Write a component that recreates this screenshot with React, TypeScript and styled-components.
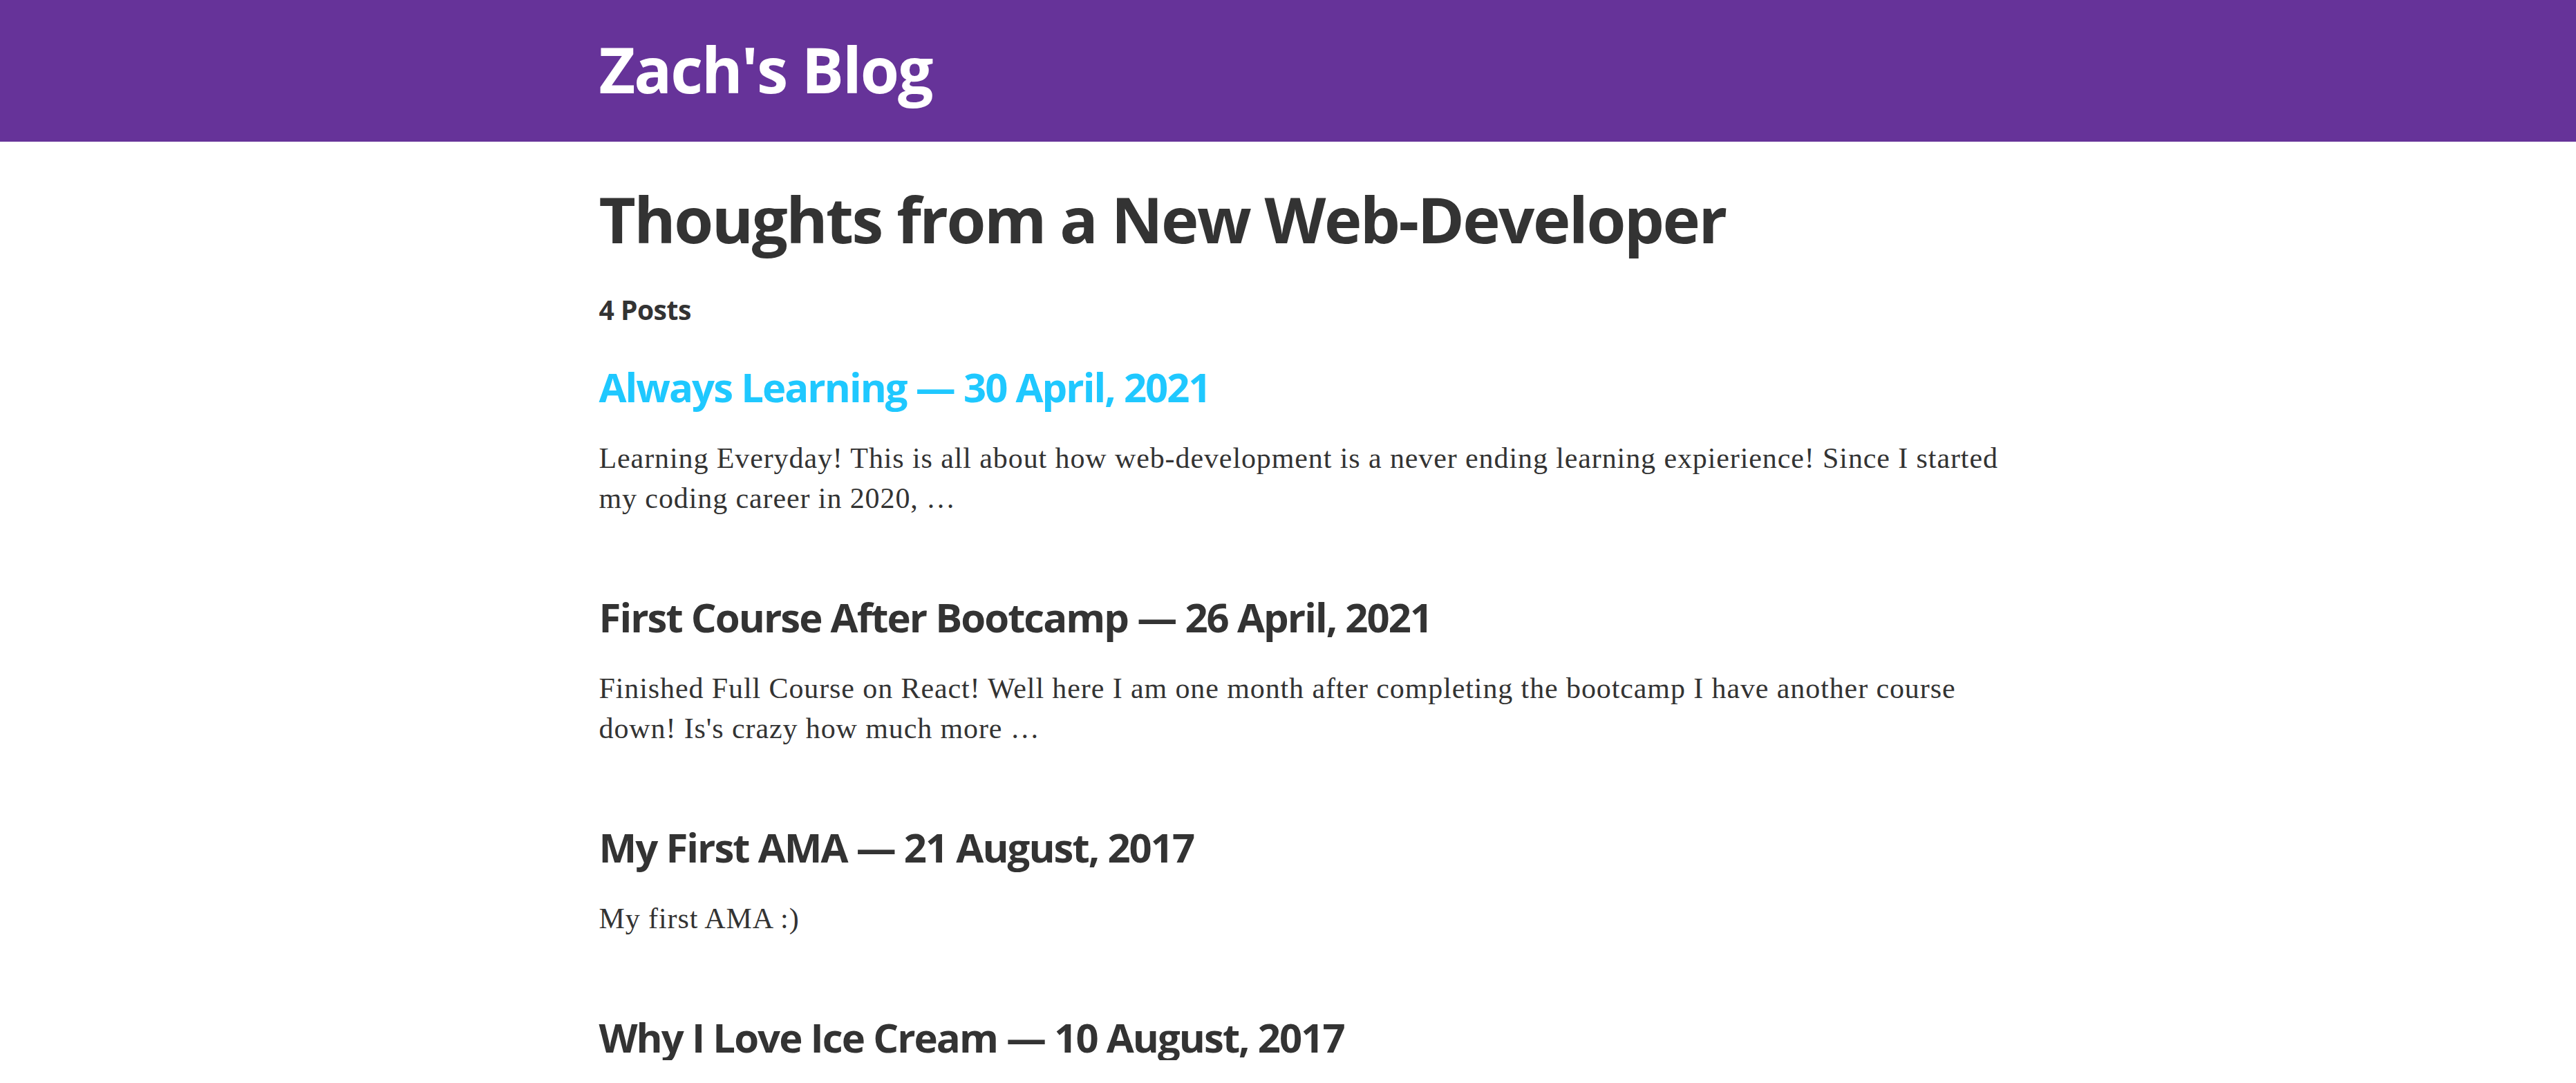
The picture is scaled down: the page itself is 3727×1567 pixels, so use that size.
import React from "react";
import styled, { createGlobalStyle } from "styled-components";

const GlobalStyle = createGlobalStyle`
  html, body {
    margin: 0;
    padding: 0;
    background: #ffffff;
  }
  body {
    font-family: "Liberation Serif", "Times New Roman", serif;
    color: rgba(0, 0, 0, 0.8);
  }
  * { box-sizing: border-box; }
`;

const Page = styled.div`
  display: flex;
  flex-direction: column;
  padding-left: 60px;
`;

const Header = styled.header`
  background: #663399;
  margin-left: -60px;
  padding: 50px 0 55px 60px;
`;

const Container = styled.div`
  width: 2054px;
  margin: 0 auto;
`;

const SiteTitle = styled.h1`
  margin: 0;
  font-family: "Open Sans", "Noto Sans", sans-serif;
  font-weight: 700;
  font-size: 91px;
  line-height: 100px;
  letter-spacing: -2px;
  a {
    color: #ffffff;
    text-decoration: none;
  }
`;

const Main = styled.main`
  padding-top: 62px;
`;

const PageTitle = styled.h1`
  margin: 0 0 52px;
  font-family: "Open Sans", "Noto Sans", sans-serif;
  font-weight: 700;
  font-size: 92px;
  line-height: 100px;
  letter-spacing: -2.5px;
  color: #333333;
`;

const PostCount = styled.h4`
  margin: 0 0 50px;
  font-family: "Open Sans", "Noto Sans", sans-serif;
  font-weight: 700;
  font-size: 39px;
  line-height: 58px;
  letter-spacing: -0.5px;
  color: #333333;
`;

const PostList = styled.div`
  display: flex;
  flex-direction: column;
  gap: 110px;
`;

const PostItem = styled.article`
  display: flex;
  flex-direction: column;
  gap: 41px;
`;

const PostLink = styled.a<{ $active?: boolean }>`
  text-decoration: none;
  color: ${(p) => (p.$active ? "#1fc8ff" : "#333333")};
`;

const PostTitle = styled.h3`
  margin: 0;
  font-family: "Open Sans", "Noto Sans", sans-serif;
  font-weight: 700;
  font-size: 58px;
  line-height: 66px;
  letter-spacing: -1.95px;
`;

const Excerpt = styled.p`
  margin: 0;
  font-family: "Liberation Serif", "Times New Roman", serif;
  font-size: 42px;
  line-height: 58px;
  letter-spacing: 0.9px;
  color: #333333;
`;

type Post = { title: string; date: string; excerpt?: string };

const posts: Post[] = [
  {
    title: "Always Learning",
    date: "30 April, 2021",
    excerpt:
      "Learning Everyday! This is all about how web-development is a never ending learning expierience! Since I started my coding career in 2020, …",
  },
  {
    title: "First Course After Bootcamp",
    date: "26 April, 2021",
    excerpt:
      "Finished Full Course on React! Well here I am one month after completing the bootcamp I have another course down! Is's crazy how much more …",
  },
  {
    title: "My First AMA",
    date: "21 August, 2017",
    excerpt: "My first AMA :)",
  },
  {
    title: "Why I Love Ice Cream",
    date: "10 August, 2017",
  },
];

export default function App() {
  return (
    <>
      <GlobalStyle />
      <Page>
        <Header>
          <Container>
            <SiteTitle>
              <a href="#">Zach's Blog</a>
            </SiteTitle>
          </Container>
        </Header>
        <Main>
          <Container>
            <PageTitle>Thoughts from a New Web-Developer</PageTitle>
            <PostCount>4 Posts</PostCount>
            <PostList>
              {posts.map((post, i) => (
                <PostItem key={post.title}>
                  <PostLink href="#" $active={i === 0}>
                    <PostTitle>
                      {post.title} — {post.date}
                    </PostTitle>
                  </PostLink>
                  {post.excerpt && <Excerpt>{post.excerpt}</Excerpt>}
                </PostItem>
              ))}
            </PostList>
          </Container>
        </Main>
      </Page>
    </>
  );
}
